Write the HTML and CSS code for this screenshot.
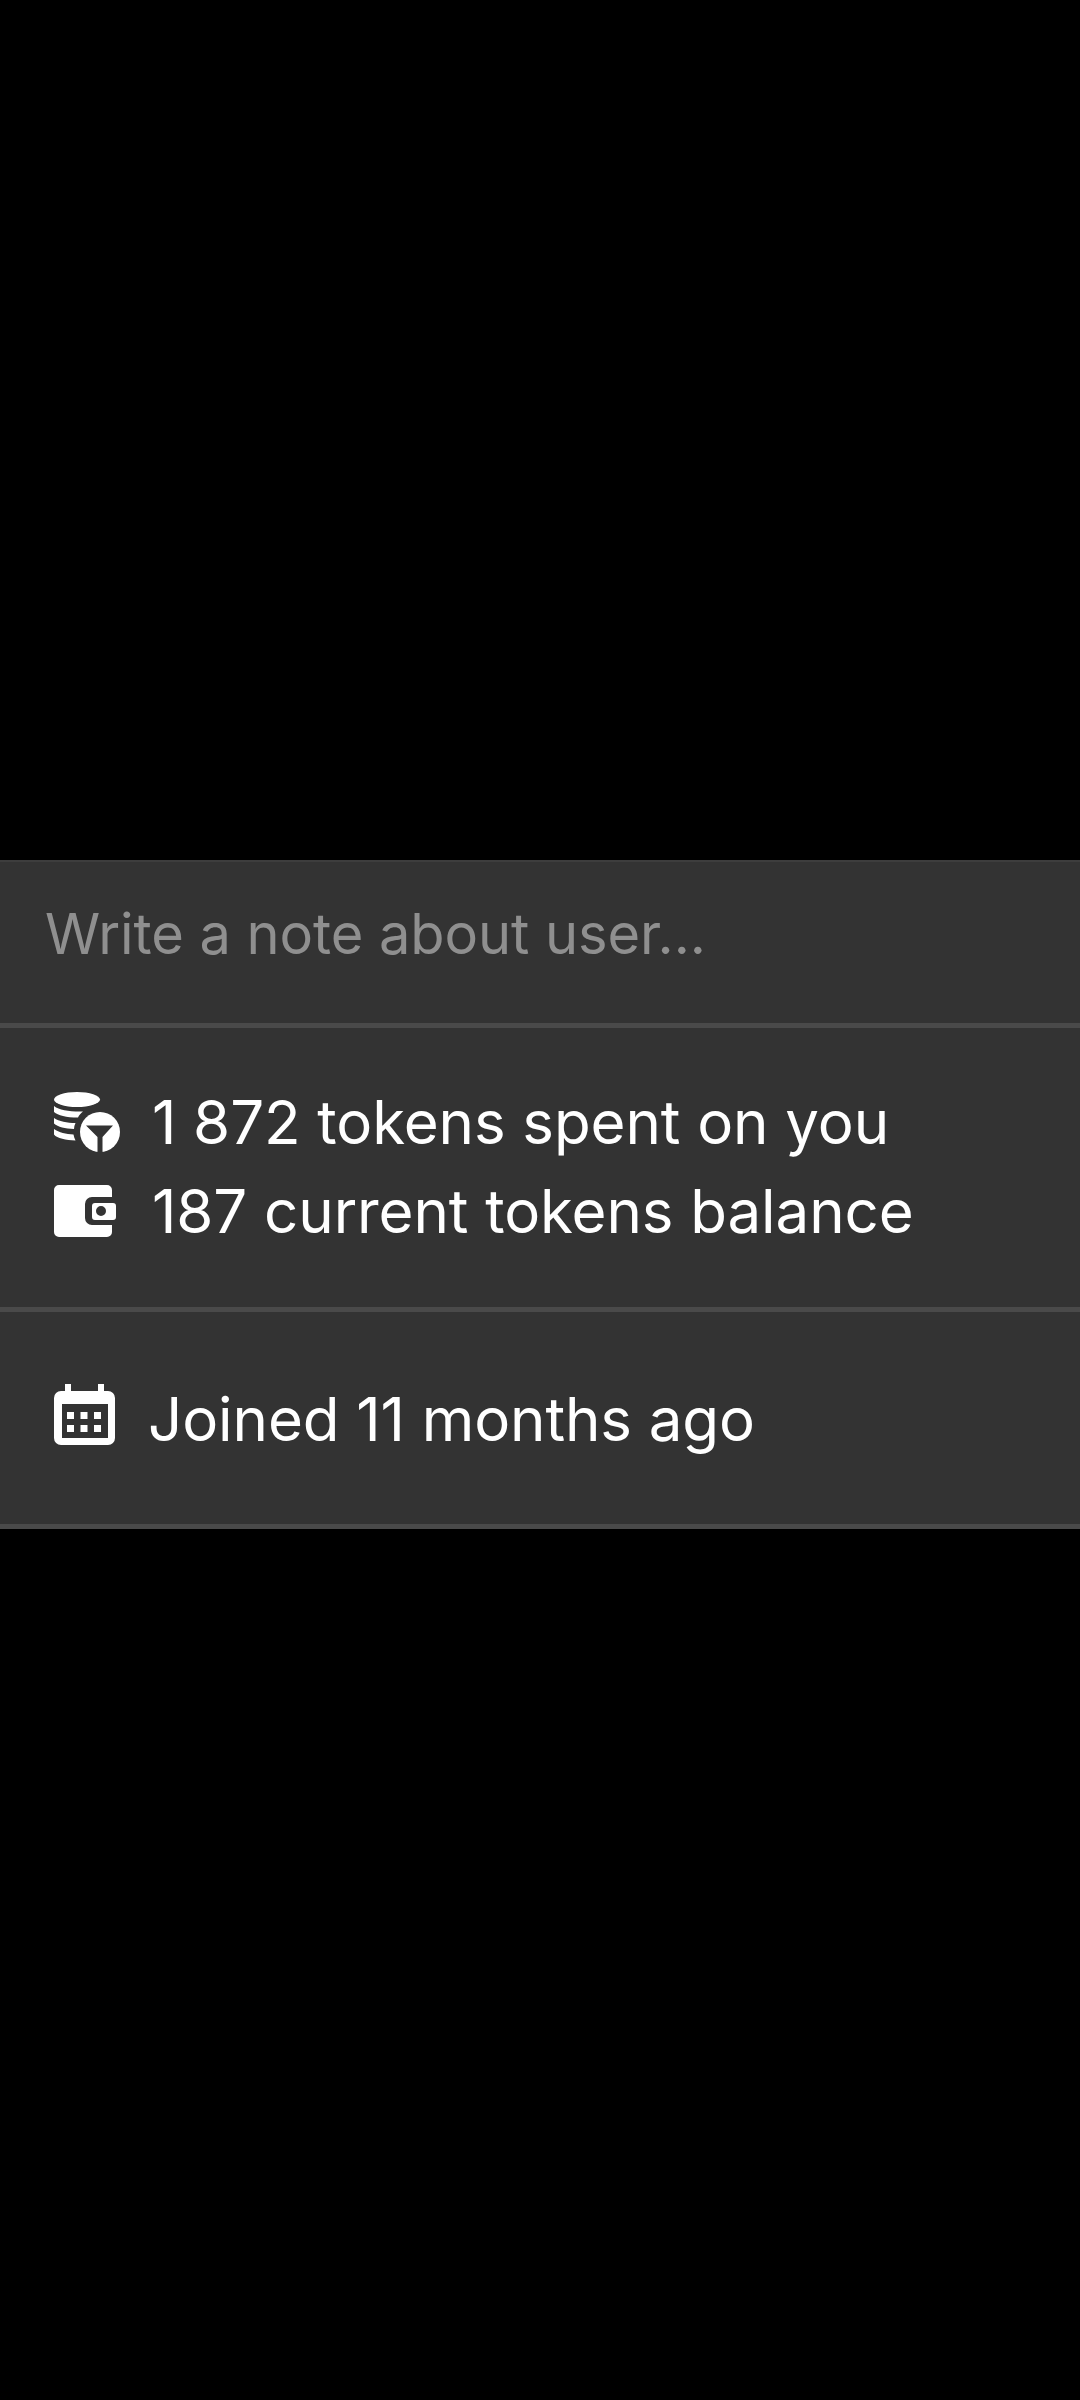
FILE: index.html
```html
<!DOCTYPE html>
<html lang="en">
<head>
<meta charset="utf-8">
<title>User details</title>
<link rel="stylesheet" href="styles.css">
</head>
<body>
<main class="panel">
  <section class="section note">
    <p class="note-text">Write a note about user...</p>
  </section>
  <section class="section tokens">
    <div class="row row-spent">
      <svg class="icon" width="66" height="60" viewBox="0 0 66 60" aria-hidden="true">
        <ellipse cx="23" cy="7.500" rx="23" ry="7.500" fill="#fff"/>
        <path d="M0 14C5 18 14 19.500 26 19.500L29 19.500C27 21 25 23 24 25.500C12 25.500 4 23.500 0 20Z" fill="#fff"/>
        <path d="M0 26C5 29.500 13 31 21.500 31C20.500 33 20 35 20 37C11 36.500 4 35 0 31.500Z" fill="#fff"/>
        <path d="M0 37C5 40.500 12 42 19.500 42.500C19.800 44.500 20.500 46.500 21.500 48.500C12 48 3 46.500 0 42.500Z" fill="#fff"/>
        <circle cx="46" cy="40" r="20" fill="#fff"/>
        <path d="M32 33.500H59L48.500 45V60H43.500V45Z" fill="#333"/>
      </svg>
      <span class="label">1 872 tokens spent on you</span>
    </div>
    <div class="row row-balance">
      <svg class="icon" width="66" height="52" viewBox="0 0 66 52" aria-hidden="true">
        <path d="M5 0H53A5 5 0 0 1 58 5V12H38A7 7 0 0 0 31 19V33A7 7 0 0 0 38 40H58V47A5 5 0 0 1 53 52H5A5 5 0 0 1 0 47V5A5 5 0 0 1 5 0Z" fill="#fff"/>
        <path fill-rule="evenodd" d="M41 18H59A3 3 0 0 1 62 21V32A3 3 0 0 1 59 35H41A3 3 0 0 1 38 32V21A3 3 0 0 1 41 18ZM47 21A5 5 0 1 0 47 31A5 5 0 1 0 47 21Z" fill="#fff"/>
      </svg>
      <span class="label">187 current tokens balance</span>
    </div>
  </section>
  <section class="section joined">
    <div class="row">
      <svg class="icon icon-calendar" width="61" height="61" viewBox="0 0 61 61" aria-hidden="true">
        <path fill-rule="evenodd" d="M11 0H17V7H44V0H50V7H54A7 7 0 0 1 61 14V54A7 7 0 0 1 54 61H7A7 7 0 0 1 0 54V14A7 7 0 0 1 7 7H11ZM8 20V54H54V20Z" fill="#fff"/>
        <g fill="#fff">
          <rect x="13" y="28" width="7" height="7"/><rect x="26.500" y="28" width="7" height="7"/><rect x="40" y="28" width="7" height="7"/>
          <rect x="13" y="41" width="7" height="7"/><rect x="26.500" y="41" width="7" height="7"/><rect x="40" y="41" width="7" height="7"/>
        </g>
      </svg>
      <span class="label">Joined 11 months ago</span>
    </div>
  </section>
</main>
</body>
</html>
```
FILE: styles.css
```css
* { box-sizing: border-box; }
html, body { margin: 0; background: #000; }
body { width: 1080px; height: 2400px; padding-top: 860px; font-family: Inter, "Liberation Sans", sans-serif; overflow: hidden; }
.panel { background: #333; border-top: 2px solid #3d3d3d; color: #fff; filter: blur(0.5px); }
.section { border-bottom: 5px solid #4a4a4a; }
.note { height: 166px; padding: 40px 45px 0; }
.note-text { margin: 0; font-size: 56px; line-height: 64px; color: #8f8f8f; letter-spacing: -0.08px; }
.tokens { height: 284px; padding: 60px 54px 0; }
.joined { height: 217px; padding: 72px 54px 0; }
.row { display: flex; align-items: center; font-size: 60px; line-height: 68px; letter-spacing: -0.08px; }
.icon { flex: none; margin-right: 32px; }
.row-spent { height: 68px; }
.row-balance { height: 68px; margin-top: 21px; }
.icon-calendar { margin-right: 33px; margin-bottom: 8px; }
.label { white-space: nowrap; }
```
